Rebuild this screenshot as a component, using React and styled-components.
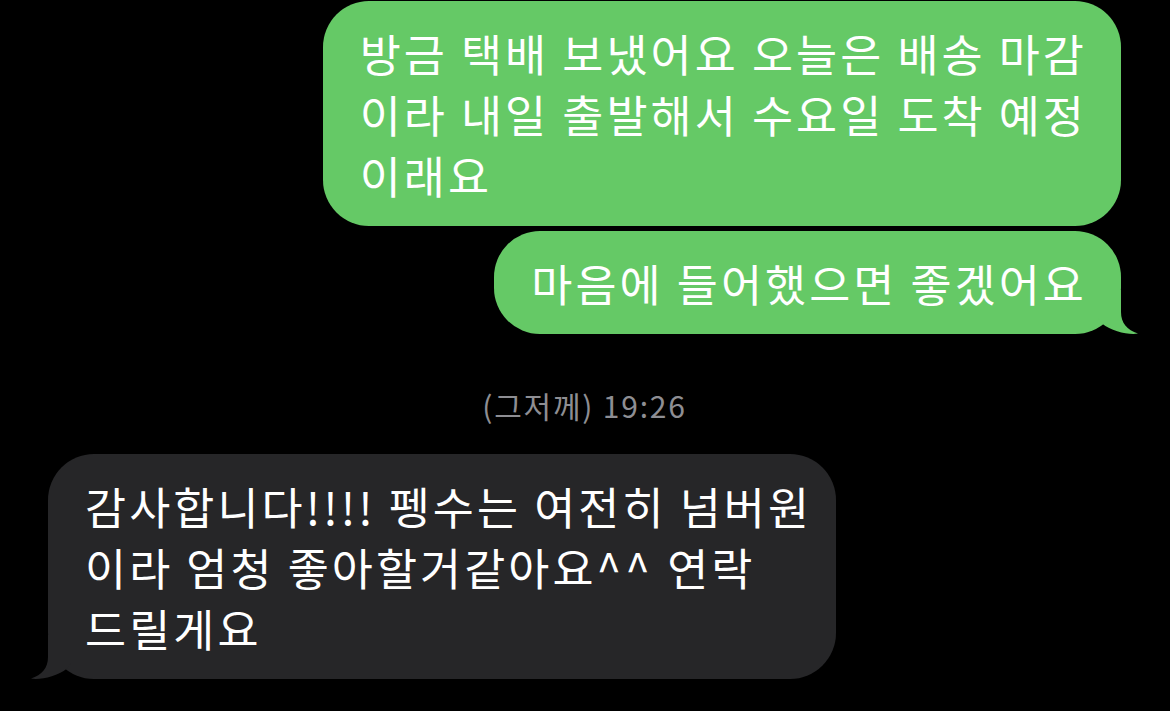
import styled, { createGlobalStyle } from "styled-components";

const GlobalStyle = createGlobalStyle`
  html, body {
    margin: 0;
    padding: 0;
    background: #000;
  }
  body {
    font-family: "Noto Sans CJK KR", "Noto Sans", sans-serif;
    -webkit-font-smoothing: antialiased;
  }
`;

const Thread = styled.div`
  width: 1170px;
  height: 711px;
  box-sizing: border-box;
  padding: 1px 49px 0 48px;
  display: flex;
  flex-direction: column;
  overflow: hidden;
`;

const Bubble = styled.div`
  position: relative;
  align-self: ${(p) => (p.$mine ? "flex-end" : "flex-start")};
  background: ${(p) => (p.$mine ? "#65c966" : "#262628")};
  color: #fff;
  border-radius: 46px;
  padding: 21px ${(p) => (p.$mine ? 34 : 24)}px 21px 37px;
  margin-top: ${(p) => p.$gap || 0}px;
  font-size: 44.6px;
  line-height: 61px;
  letter-spacing: 3.1px;
  white-space: nowrap;
`;

const Line = styled.div``;

const Caret = styled.span`
  letter-spacing: 4px;
`;

const Tail = styled.svg`
  position: absolute;
  bottom: 0;
  ${(p) => (p.$mine ? "right: -17px;" : "left: -17px; transform: scaleX(-1);")}
  width: 40px;
  height: 44px;
  fill: ${(p) => (p.$mine ? "#65c966" : "#262628")};
`;

const Stamp = styled.div`
  align-self: center;
  margin: 53px 0 31px;
  color: #8e8e93;
  font-size: 30px;
  line-height: 36px;
  letter-spacing: 1.8px;
`;

const BubbleTail = ({ mine }) => (
  <Tail $mine={mine} viewBox="0 0 40 44">
    <path d="M0,0 L23,0 L23,22 C23,33 29,40 40,43.6 C30,45 14,41.5 4,33.5 L0,28 Z" />
  </Tail>
);

const Message = ({ mine, lines, tail, gap }) => (
  <Bubble $mine={mine} $gap={gap}>
    {lines.map((l, i) => (
      <Line key={i}>{l}</Line>
    ))}
    {tail && <BubbleTail mine={mine} />}
  </Bubble>
);

export default function App() {
  return (
    <>
      <GlobalStyle />
      <Thread>
        <Message
          mine
          lines={[
            "방금 택배 보냈어요 오늘은 배송 마감",
            "이라 내일 출발해서 수요일 도착 예정",
            "이래요",
          ]}
        />
        <Message mine tail gap={5} lines={["마음에 들어했으면 좋겠어요"]} />
        <Stamp>(그저께) 19:26</Stamp>
        <Message
          tail
          lines={[
            "감사합니다!!!! 펭수는 여전히 넘버원",
            <>
              이라 엄청 좋아할거같아요<Caret>^^</Caret> 연락
            </>,
            "드릴게요",
          ]}
        />
      </Thread>
    </>
  );
}
